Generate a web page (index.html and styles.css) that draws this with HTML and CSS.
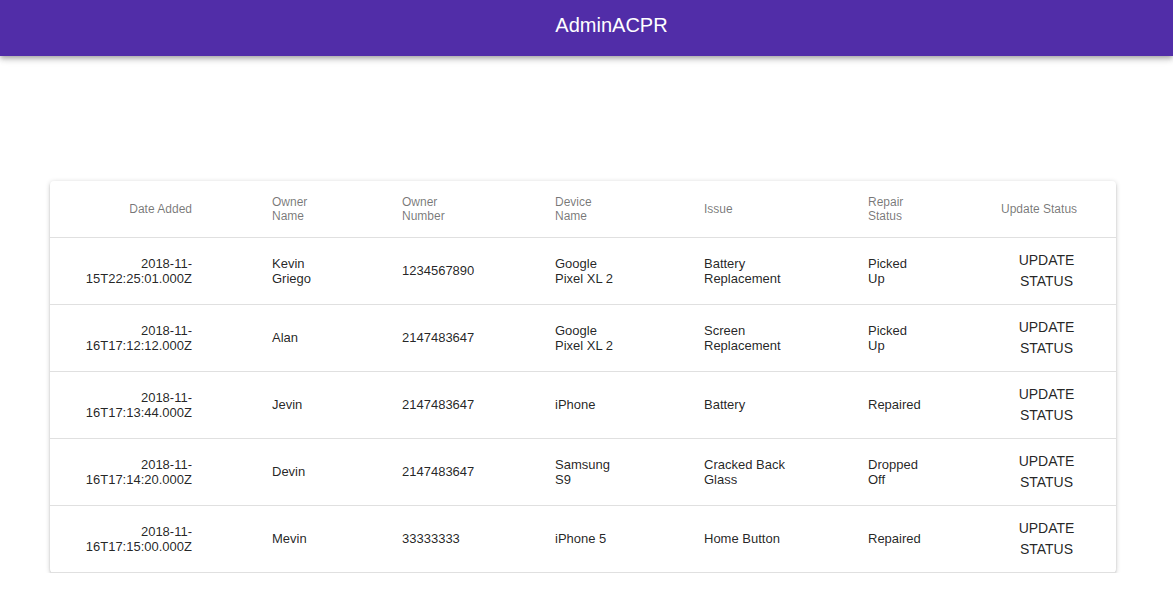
FILE: index.html
```html
<!DOCTYPE html>
<html>
<head>
<meta charset="utf-8">
<link rel="stylesheet" href="styles.css">
</head>
<body>
<header class="appbar"><h1 class="title">AdminACPR</h1></header>
<main class="content">
  <div class="paper">
    <table class="table">
      <colgroup>
        <col class="c-date"><col class="c-name"><col class="c-num"><col class="c-dev"><col class="c-issue"><col class="c-status"><col class="c-update">
      </colgroup>
      <thead>
        <tr class="head-row">
          <th class="cell num">Date Added</th>
          <th class="cell">Owner Name</th>
          <th class="cell">Owner Number</th>
          <th class="cell">Device Name</th>
          <th class="cell">Issue</th>
          <th class="cell">Repair Status</th>
          <th class="cell last">Update Status</th>
        </tr>
      </thead>
      <tbody>
        <tr class="row">
          <td class="cell num">2018-11-15T22:25:01.000Z</td>
          <td class="cell">Kevin Griego</td>
          <td class="cell">1234567890</td>
          <td class="cell">Google Pixel XL 2</td>
          <td class="cell">Battery Replacement</td>
          <td class="cell">Picked Up</td>
          <td class="cell last"><button class="btn">Update Status</button></td>
        </tr>
        <tr class="row">
          <td class="cell num">2018-11-16T17:12:12.000Z</td>
          <td class="cell">Alan</td>
          <td class="cell">2147483647</td>
          <td class="cell">Google Pixel XL 2</td>
          <td class="cell">Screen Replacement</td>
          <td class="cell">Picked Up</td>
          <td class="cell last"><button class="btn">Update Status</button></td>
        </tr>
        <tr class="row">
          <td class="cell num">2018-11-16T17:13:44.000Z</td>
          <td class="cell">Jevin</td>
          <td class="cell">2147483647</td>
          <td class="cell">iPhone</td>
          <td class="cell">Battery</td>
          <td class="cell">Repaired</td>
          <td class="cell last"><button class="btn">Update Status</button></td>
        </tr>
        <tr class="row">
          <td class="cell num">2018-11-16T17:14:20.000Z</td>
          <td class="cell">Devin</td>
          <td class="cell">2147483647</td>
          <td class="cell">Samsung S9</td>
          <td class="cell">Cracked Back Glass</td>
          <td class="cell">Dropped Off</td>
          <td class="cell last"><button class="btn">Update Status</button></td>
        </tr>
        <tr class="row">
          <td class="cell num">2018-11-16T17:15:00.000Z</td>
          <td class="cell">Mevin</td>
          <td class="cell">33333333</td>
          <td class="cell">iPhone 5</td>
          <td class="cell">Home Button</td>
          <td class="cell">Repaired</td>
          <td class="cell last"><button class="btn">Update Status</button></td>
        </tr>
      </tbody>
    </table>
  </div>
</main>
</body>
</html>
```
FILE: styles.css
```css
html, body {
  margin: 0;
  padding: 0;
  background: #fff;
  font-family: "Liberation Sans", Arial, sans-serif;
}
.appbar {
  height: 56px;
  background: #512da8;
  box-shadow: 0px 2px 4px -1px rgba(0,0,0,0.2), 0px 4px 5px 0px rgba(0,0,0,0.14), 0px 1px 10px 0px rgba(0,0,0,0.12);
  box-sizing: border-box;
  padding-top: 12px;
  padding-left: 50px;
  text-align: center;
  position: relative;
  z-index: 1;
}
.title {
  margin: 0;
  font-size: 20px;
  font-weight: 400;
  line-height: 1.33;
  color: #fff;
}
.content {
  padding: 125px 57px 0 50px;
}
.paper {
  width: 1066px;
  background: #fff;
  border-radius: 4px;
  box-shadow: 0px 1px 5px 0px rgba(0,0,0,0.2), 0px 2px 2px 0px rgba(0,0,0,0.14), 0px 3px 1px -2px rgba(0,0,0,0.12);
}
.table {
  width: 100%;
  table-layout: fixed;
  border-collapse: collapse;
  border-spacing: 0;
}
.c-date { width: 198px; }
.c-name { width: 130px; }
.c-num { width: 153px; }
.c-dev { width: 149px; }
.c-issue { width: 164px; }
.c-status { width: 133px; }
.c-update { width: 139px; }
.cell {
  padding: 4px 56px 4px 24px;
  text-align: left;
  vertical-align: middle;
  border-bottom: 1px solid rgba(224,224,224,1);
  font-size: 13px;
  font-weight: 400;
  color: rgba(0,0,0,0.87);
  line-height: normal;
  box-sizing: border-box;
}
.cell.num { text-align: right; }
.cell.last { padding-right: 24px; }
.head-row { height: 56px; }
.head-row .cell {
  font-size: 12px;
  color: rgba(0,0,0,0.54);
}
.row { height: 48px; }
.btn {
  display: inline-flex;
  align-items: center;
  justify-content: center;
  box-sizing: border-box;
  min-width: 64px;
  min-height: 36px;
  padding: 8px 16px;
  margin: 0;
  border: 0;
  border-radius: 4px;
  background: transparent;
  font-family: "Liberation Sans", Arial, sans-serif;
  font-size: 14px;
  font-weight: 400;
  line-height: 1.5;
  text-transform: uppercase;
  text-align: center;
  color: rgba(0,0,0,0.87);
  cursor: pointer;
}
```
